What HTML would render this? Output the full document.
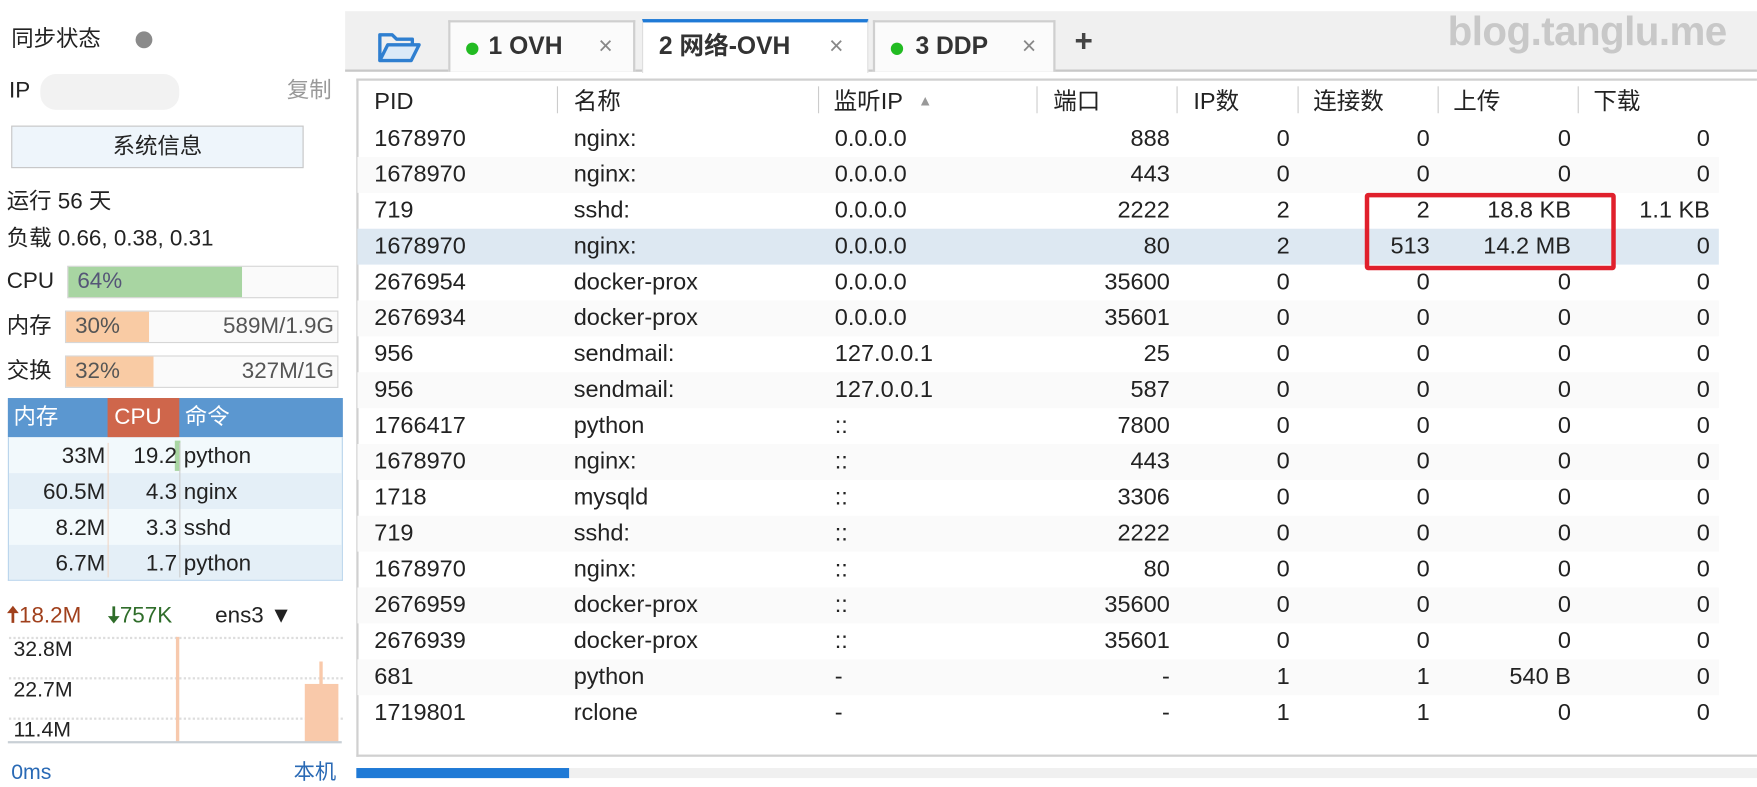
<!DOCTYPE html>
<html><head><meta charset="utf-8"><style>
*{margin:0;padding:0;box-sizing:border-box}
html,body{width:1757px;height:777px;overflow:hidden;background:#fff}
#w{position:absolute;left:0;top:0;width:1568px;height:694px;transform:scale(1.1205,1.1212);transform-origin:0 0;font-family:"Liberation Sans","Noto Sans CJK SC",sans-serif;color:#222}
.a{position:absolute;white-space:nowrap}
.t{font-size:21px;line-height:32px}
.r{text-align:right}
.row{position:absolute;left:319px;width:1215px;height:32px}
.hdr{font-size:21px;line-height:26px}
.sep{position:absolute;top:77px;width:1px;height:24px;background:#ccc}
.lb{font-size:20px;line-height:29px}
</style></head><body><div id="w">
<!-- sidebar -->
<div class="a lb" style="left:10px;top:21px">同步状态</div>
<div class="a" style="left:121px;top:28px;width:15px;height:15px;border-radius:50%;background:#8a8a8a"></div>
<div class="a lb" style="left:8px;top:67px">IP</div>
<div class="a" style="left:36px;top:66px;width:124px;height:32px;border-radius:14px;background:#f2f2f2"></div>
<div class="a lb" style="left:256px;top:67px;color:#999">复制</div>
<div class="a" style="left:10px;top:112px;width:261px;height:38px;border:1px solid #c6c6c6;background:#eef5fb;text-align:center;font-size:20px;line-height:36px">系统信息</div>
<div class="a lb" style="left:6px;top:166px">运行 56 天</div>
<div class="a lb" style="left:6px;top:199px">负载 0.66, 0.38, 0.31</div>
<div class="a lb" style="left:6px;top:237px">CPU</div>
<div class="a" style="left:60px;top:237px;width:242px;height:29px;border:1px solid #d6d6d6;background:#fafafa"></div>
<div class="a" style="left:61px;top:238px;width:155px;height:27px;background:#a8d5a2;font-size:20px;line-height:27px;padding-left:8px;color:#557">64%</div>
<div class="a lb" style="left:6px;top:277px">内存</div>
<div class="a" style="left:58px;top:277px;width:244px;height:29px;border:1px solid #d6d6d6;background:#fafafa"></div>
<div class="a" style="left:59px;top:278px;width:74px;height:27px;background:#f9cba4;font-size:20px;line-height:27px;padding-left:8px;color:#555">30%</div>
<div class="a r" style="right:1270px;top:278px;font-size:20px;line-height:27px;color:#555">589M/1.9G</div>
<div class="a lb" style="left:6px;top:317px">交换</div>
<div class="a" style="left:58px;top:317px;width:244px;height:29px;border:1px solid #d6d6d6;background:#fafafa"></div>
<div class="a" style="left:59px;top:318px;width:78px;height:27px;background:#f9cba4;font-size:20px;line-height:27px;padding-left:8px;color:#555">32%</div>
<div class="a r" style="right:1270px;top:318px;font-size:20px;line-height:27px;color:#555">327M/1G</div>
<div class="a" style="left:7px;top:355px;width:299px;height:35px;background:#5b97d0"></div>
<div class="a" style="left:96px;top:355px;width:64px;height:35px;background:#cf664b"></div>
<div class="a" style="left:12px;top:358px;font-size:20px;line-height:29px;color:#fff">内存</div>
<div class="a" style="left:102px;top:358px;font-size:20px;line-height:29px;color:#fff">CPU</div>
<div class="a" style="left:165px;top:358px;font-size:20px;line-height:29px;color:#fff">命令</div>
<div class="a" style="left:7px;top:390px;width:299px;height:128px;border:1px solid #b9d4ec;border-top:none;background:#f2f9fc"></div>
<div class="a" style="left:8px;top:422px;width:297px;height:32px;background:#e4eff7"></div>
<div class="a" style="left:8px;top:486px;width:297px;height:31px;background:#e4eff7"></div>
<div class="a" style="left:156px;top:393px;width:5px;height:27px;background:#a8d5a2"></div>
<div class="a" style="left:96px;top:395px;width:1px;height:120px;background:#f0d8c8"></div>
<div class="a" style="left:160px;top:395px;width:1px;height:120px;background:#ccc"></div>
<div class="a r" style="right:1474px;top:391px;font-size:20px;line-height:32px">33M<br>60.5M<br>8.2M<br>6.7M</div>
<div class="a r" style="right:1410px;top:391px;font-size:20px;line-height:32px">19.2<br>4.3<br>3.3<br>1.7</div>
<div class="a" style="left:164px;top:391px;font-size:20px;line-height:32px">python<br>nginx<br>sshd<br>python</div>
<div class="a" style="left:6px;top:536px;font-size:20px;line-height:26px;color:#a0401c"><b>🠅</b>18.2M</div>
<div class="a" style="left:96px;top:536px;font-size:20px;line-height:26px;color:#2f6d2a"><b>🠇</b>757K</div>
<div class="a" style="left:192px;top:536px;font-size:20px;line-height:26px">ens3 ▼</div>
<div class="a" style="left:8px;top:568px;width:298px;height:0;border-top:2px dotted #ddd"></div>
<div class="a" style="left:8px;top:604px;width:298px;height:0;border-top:2px dotted #ddd"></div>
<div class="a" style="left:8px;top:640px;width:298px;height:0;border-top:2px dotted #ddd"></div>
<div class="a" style="left:157px;top:568px;width:3px;height:94px;background:#f7c9ad"></div>
<div class="a" style="left:272px;top:610px;width:30px;height:52px;background:#f9c9aa"></div>
<div class="a" style="left:285px;top:590px;width:3px;height:22px;background:#f9c9aa"></div>
<div class="a" style="left:7px;top:661px;width:298px;height:2px;background:#c9d0d6"></div>
<div class="a" style="left:12px;top:562px;font-size:19px;line-height:36px">32.8M<br>22.7M<br>11.4M</div>
<div class="a" style="left:10px;top:678px;font-size:19px;line-height:24px;color:#2a6ab5">0ms</div>
<div class="a" style="left:262px;top:678px;font-size:19px;line-height:24px;color:#2a6ab5">本机</div>
<!-- tab bar -->
<div class="a" style="left:308px;top:10px;width:1260px;height:54px;background:#f0f0f0;border-bottom:2px solid #c8c8c8"></div>
<svg class="a" style="left:336px;top:26px" width="40" height="32" viewBox="0 0 40 32"><path d="M3 28V5h11l4 4h14v5" fill="none" stroke="#2f7fd0" stroke-width="3" stroke-linejoin="round"/><path d="M3 28l7-14h28l-7 14z" fill="#dbeaf8" stroke="#2f7fd0" stroke-width="3" stroke-linejoin="round"/></svg>
<div class="a" style="left:400px;top:18px;width:167px;height:46px;border:2px solid #cfcfcf;border-bottom:none;background:#fbfbfb"></div>
<div class="a" style="left:416px;top:38px;width:11px;height:11px;border-radius:50%;background:#22bb22"></div>
<div class="a" style="left:436px;top:28px;font-size:22px;line-height:26px;font-weight:bold;color:#333">1 OVH</div>
<div class="a" style="left:534px;top:28px;font-size:22px;line-height:26px;color:#888">×</div>
<div class="a" style="left:573px;top:17px;width:202px;height:48px;background:#fff;border-top:3px solid #1f7ad6;border-left:1px solid #ddd;border-right:1px solid #ddd"></div>
<div class="a" style="left:588px;top:28px;font-size:22px;line-height:26px;font-weight:bold;color:#333">2 网络-OVH</div>
<div class="a" style="left:740px;top:28px;font-size:22px;line-height:26px;color:#888">×</div>
<div class="a" style="left:779px;top:18px;width:163px;height:46px;border:2px solid #cfcfcf;border-bottom:none;background:#fbfbfb"></div>
<div class="a" style="left:795px;top:38px;width:11px;height:11px;border-radius:50%;background:#22bb22"></div>
<div class="a" style="left:817px;top:28px;font-size:22px;line-height:26px;font-weight:bold;color:#333">3 DDP</div>
<div class="a" style="left:912px;top:28px;font-size:22px;line-height:26px;color:#888">×</div>
<div class="a" style="left:959px;top:22px;font-size:28px;line-height:30px;font-weight:bold;color:#444">+</div>
<div class="a" style="left:1292px;top:8px;font-size:36px;line-height:40px;font-weight:bold;color:#c8c8c8;letter-spacing:-0.5px">blog.tanglu.me</div>
<!-- table -->
<div class="a" style="left:318px;top:70px;width:1250px;height:605px;border:2px solid #d0d0d0;border-right:none"></div>
<div class="sep" style="left:497px"></div><div class="sep" style="left:730px"></div><div class="sep" style="left:925px"></div><div class="sep" style="left:1050px"></div><div class="sep" style="left:1158px"></div><div class="sep" style="left:1283px"></div><div class="sep" style="left:1408px"></div>
<div class="a hdr" style="left:334px;top:78px">PID</div>
<div class="a hdr" style="left:512px;top:78px">名称</div>
<div class="a hdr" style="left:744px;top:78px">监听IP <span style="font-size:13px;color:#999;margin-left:8px;position:relative;top:-3px">▲</span></div>
<div class="a hdr" style="left:940px;top:78px">端口</div>
<div class="a hdr" style="left:1065px;top:78px">IP数</div>
<div class="a hdr" style="left:1172px;top:78px">连接数</div>
<div class="a hdr" style="left:1297px;top:78px">上传</div>
<div class="a hdr" style="left:1422px;top:78px">下载</div>
<div class="row" style="top:140px;background:#fafafa"></div>
<div class="row" style="top:204px;background:#dde8f2"></div>
<div class="row" style="top:268px;background:#fafafa"></div>
<div class="row" style="top:332px;background:#fafafa"></div>
<div class="row" style="top:396px;background:#fafafa"></div>
<div class="row" style="top:460px;background:#fafafa"></div>
<div class="row" style="top:524px;background:#fafafa"></div>
<div class="row" style="top:588px;background:#fafafa"></div>
<div class="a t" style="left:334px;top:108px">1678970<br>1678970<br>719<br>1678970<br>2676954<br>2676934<br>956<br>956<br>1766417<br>1678970<br>1718<br>719<br>1678970<br>2676959<br>2676939<br>681<br>1719801</div>
<div class="a t" style="left:512px;top:108px">nginx:<br>nginx:<br>sshd:<br>nginx:<br>docker-prox<br>docker-prox<br>sendmail:<br>sendmail:<br>python<br>nginx:<br>mysqld<br>sshd:<br>nginx:<br>docker-prox<br>docker-prox<br>python<br>rclone</div>
<div class="a t" style="left:745px;top:108px">0.0.0.0<br>0.0.0.0<br>0.0.0.0<br>0.0.0.0<br>0.0.0.0<br>0.0.0.0<br>127.0.0.1<br>127.0.0.1<br>::<br>::<br>::<br>::<br>::<br>::<br>::<br>-<br>-</div>
<div class="a t r" style="right:524px;top:108px">888<br>443<br>2222<br>80<br>35600<br>35601<br>25<br>587<br>7800<br>443<br>3306<br>2222<br>80<br>35600<br>35601<br>-<br>-</div>
<div class="a t r" style="right:417px;top:108px">0<br>0<br>2<br>2<br>0<br>0<br>0<br>0<br>0<br>0<br>0<br>0<br>0<br>0<br>0<br>1<br>1</div>
<div class="a t r" style="right:292px;top:108px">0<br>0<br>2<br>513<br>0<br>0<br>0<br>0<br>0<br>0<br>0<br>0<br>0<br>0<br>0<br>1<br>1</div>
<div class="a t r" style="right:166px;top:108px">0<br>0<br>18.8 KB<br>14.2 MB<br>0<br>0<br>0<br>0<br>0<br>0<br>0<br>0<br>0<br>0<br>0<br>540 B<br>0</div>
<div class="a t r" style="right:42px;top:108px">0<br>0<br>1.1 KB<br>0<br>0<br>0<br>0<br>0<br>0<br>0<br>0<br>0<br>0<br>0<br>0<br>0<br>0</div>
<div class="a" style="left:1218px;top:172px;width:224px;height:69px;border:4px solid #e0202c;border-radius:3px"></div>
<div class="a" style="left:318px;top:685px;width:190px;height:9px;background:#1f7ad6"></div>
<div class="a" style="left:508px;top:685px;width:1060px;height:9px;background:#f0f0f0"></div>
</div></body></html>
